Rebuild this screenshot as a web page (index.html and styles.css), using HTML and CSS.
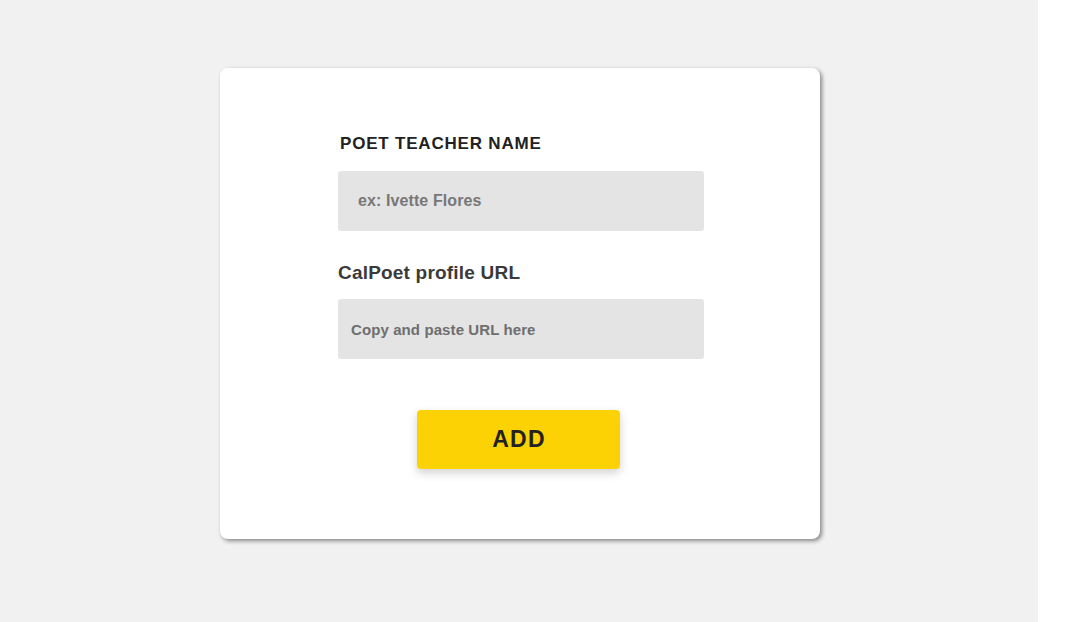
FILE: index.html
```html
<!DOCTYPE html>
<html>
<head>
<meta charset="utf-8">
<link rel="stylesheet" href="styles.css">
</head>
<body>
<div class="page">
  <div class="card">
    <form class="form">
      <label class="label-caps">POET TEACHER NAME</label>
      <div class="input input-name">ex: Ivette Flores</div>
      <label class="label">CalPoet profile URL</label>
      <div class="input input-url">Copy and paste URL here</div>
      <div class="actions">
        <button type="button" class="btn">ADD</button>
      </div>
    </form>
  </div>
</div>
</body>
</html>
```
FILE: styles.css
```css
html, body {
  margin: 0;
  padding: 0;
  background: #ffffff;
  font-family: "Liberation Sans", Arial, sans-serif;
}
.page {
  width: 1038px;
  height: 622px;
  background: #f1f1f1;
  padding-top: 68px;
  box-sizing: border-box;
}
.card {
  width: 600px;
  height: 471px;
  margin-left: 220px;
  background: #ffffff;
  border-radius: 8px;
  box-shadow: 2px 2px 4px rgba(0,0,0,0.45);
  box-sizing: border-box;
  padding-top: 66px;
}
.form {
  width: 366px;
  margin: 0 0 0 118px;
  display: flex;
  flex-direction: column;
}
.label-caps {
  font-size: 17px;
  font-weight: bold;
  letter-spacing: 0.8px;
  color: #222;
  margin-left: 2px;
  line-height: 20px;
}
.label {
  font-size: 19px;
  font-weight: bold;
  letter-spacing: 0.2px;
  color: #3a3a3a;
  line-height: 22px;
}
.input {
  height: 60px;
  background: #e4e4e4;
  border-radius: 3px;
  display: flex;
  align-items: center;
  font-weight: bold;
  color: #777;
  box-sizing: border-box;
}
.input-name {
  margin-top: 17px;
  padding-left: 20px;
  font-size: 16px;
  letter-spacing: 0.1px;
  margin-bottom: 31px;
}
.input-url {
  margin-top: 15px;
  padding-left: 13px;
  font-size: 15px;
  letter-spacing: 0.1px;
  color: #6e6e6e;
}
.actions {
  display: flex;
  justify-content: center;
  margin-top: 51px;
}
.btn {
  width: 203px;
  height: 59px;
  background: #fcd205;
  border: none;
  border-radius: 4px;
  font-family: "Liberation Sans", Arial, sans-serif;
  font-size: 23px;
  font-weight: bold;
  letter-spacing: 1.2px;
  padding: 0 0 0 1px;
  color: #222;
  box-shadow: 0 4px 10px rgba(0,0,0,0.18);
  margin-left: -5px;
}
```
